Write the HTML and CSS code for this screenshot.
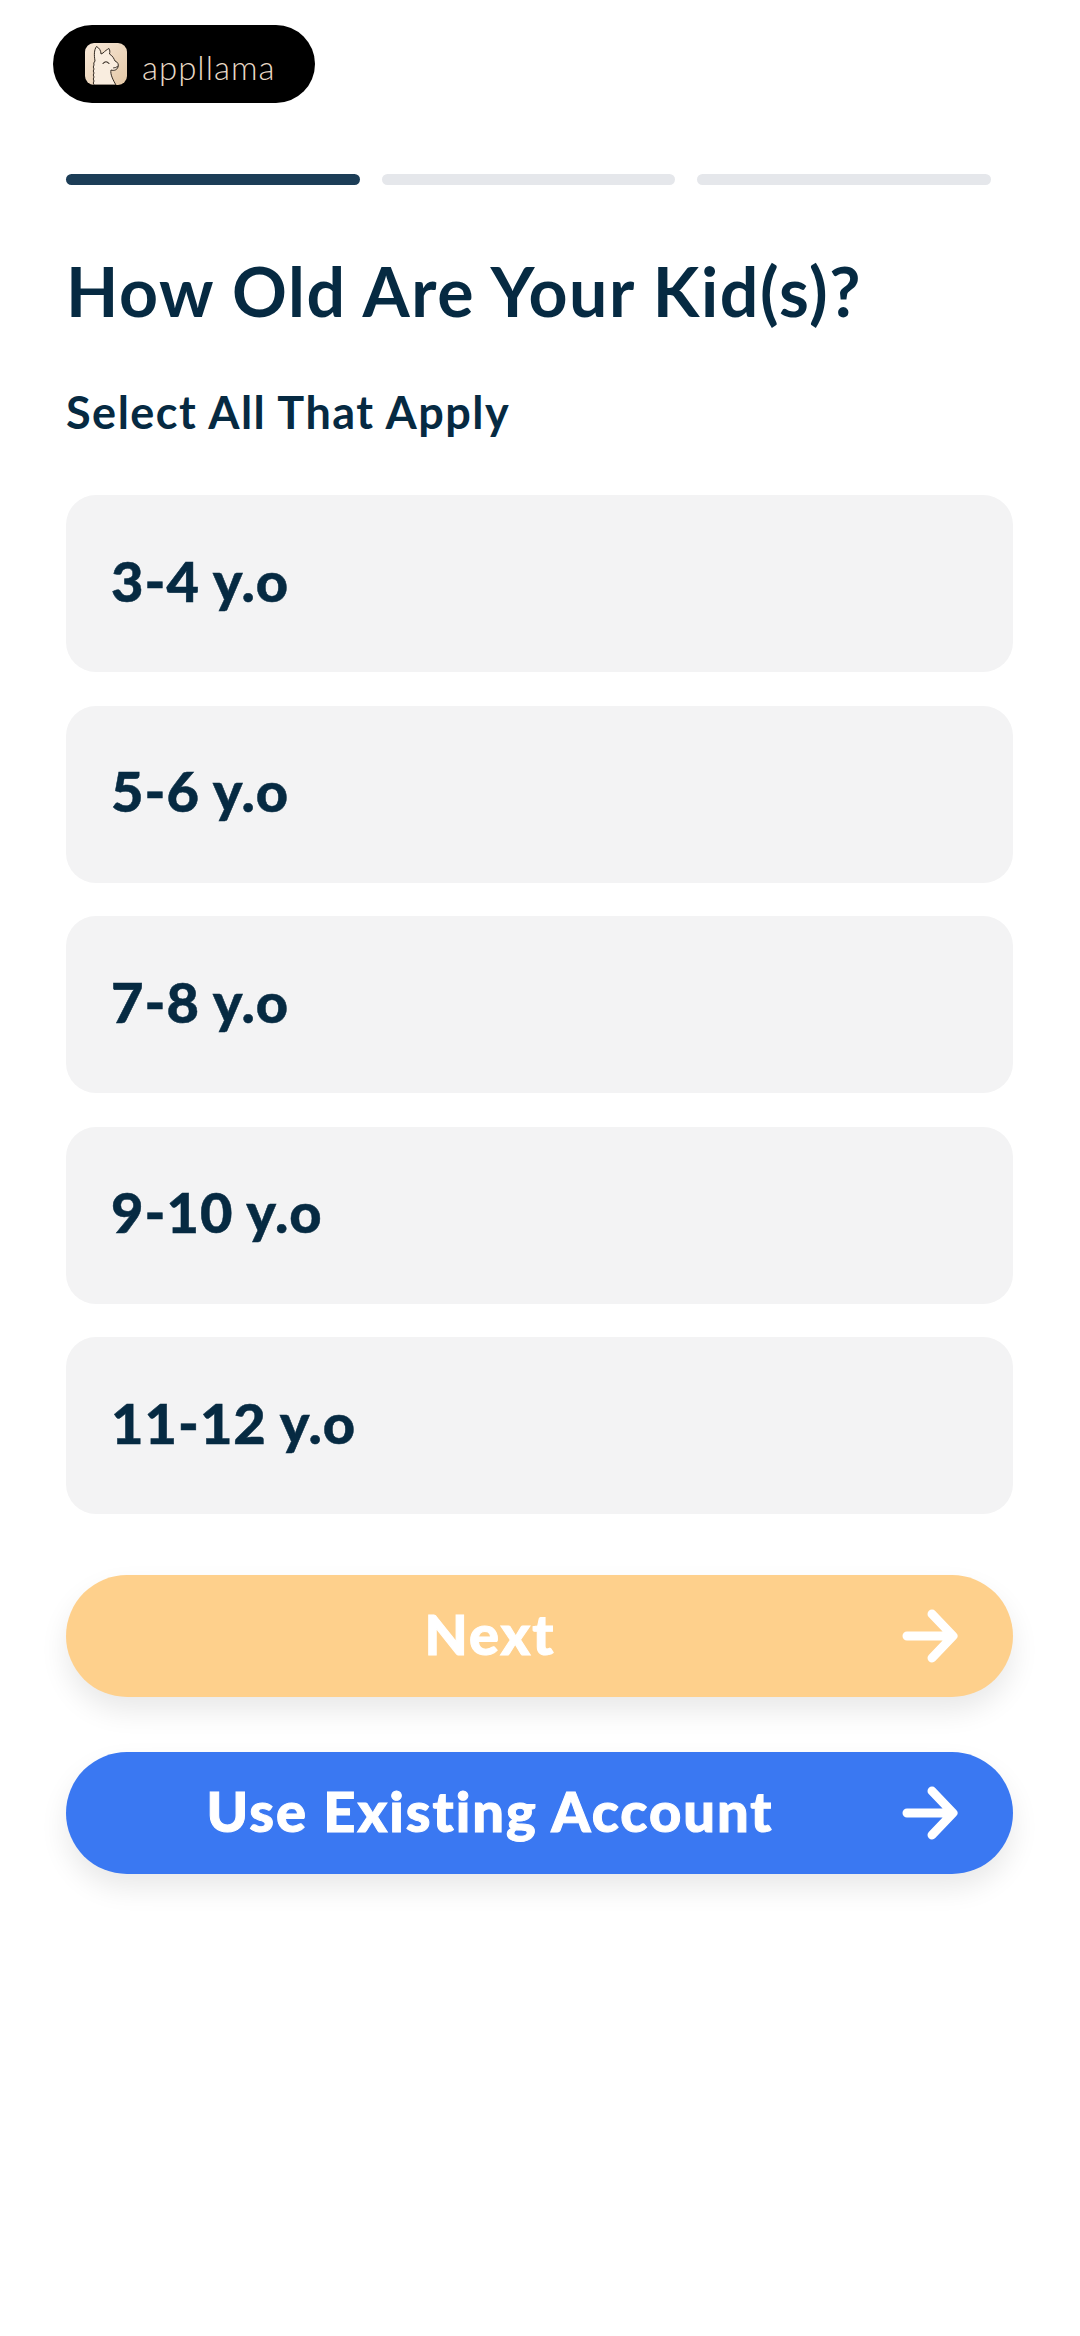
FILE: index.html
```html
<!DOCTYPE html>
<html lang="en">
<head>
    <meta charset="UTF-8">
    <meta name="viewport" content="width=device-width, initial-scale=1.0">
    <title>How Old Are Your Kid(s)?</title>
    <link rel="stylesheet" href="styles.css">
</head>
<body>
    <div id="container">
        <div class="logo">
            <svg class="logo-icon" width="42" height="42" viewBox="0 0 42 42">
                <defs>
                    <linearGradient id="logoBg" x1="0" y1="0" x2="1" y2="1">
                        <stop offset="0" stop-color="#f8e9d9"/>
                        <stop offset="1" stop-color="#e4c8a6"/>
                    </linearGradient>
                    <clipPath id="logoClip"><rect width="42" height="42" rx="9"/></clipPath>
                </defs>
                <g clip-path="url(#logoClip)">
                    <rect width="42" height="42" fill="url(#logoBg)"/>
                    <path d="M9 42 q-1.5 -2 0 -4 q-1.5 -2 0 -4 q-1.5 -2 0 -4 q-1.5 -2 0 -4 q-1.5 -2 0 -4 q-1 -2 1 -4 C9 12 9 7 11.500 3.500 C14.500 5 16 8 16 11 L18 10 C20 8 22 6.500 24 5.500 C25 7 25 9 24.500 11 C28 13 29 16 30 18 C33 19 34 22 33 24 C32 27 29 28 26 27 C25 31 28 37 31 42 Z" fill="#f9eddf" stroke="#332a22" stroke-width="1" stroke-linejoin="round"/>
                    <path d="M18 20.500 Q21 17 24 20.500" fill="none" stroke="#332a22" stroke-width="1.100" stroke-linecap="round"/>
                    <path d="M28.500 25 Q31 25.200 33 23" fill="none" stroke="#332a22" stroke-width="0.900" stroke-linecap="round"/>
                </g>
            </svg>
            <span class="logo-text">appllama</span>
        </div>

        <div class="progress">
            <div class="progress-step active"></div>
            <div class="progress-step"></div>
            <div class="progress-step"></div>
        </div>

        <h1>How Old Are Your Kid(s)?</h1>
        <h2>Select All That Apply</h2>

        <div class="options">
            <div class="option">3-4 y.o</div>
            <div class="option">5-6 y.o</div>
            <div class="option">7-8 y.o</div>
            <div class="option">9-10 y.o</div>
            <div class="option">11-12 y.o</div>
        </div>

        <div class="actions">
            <button class="action-button next">
                <span class="action-label">Next</span>
                <svg width="58" height="58" viewBox="0 0 58 58"><path d="M6 29 H51 M31 7 L52 29 L31 51" fill="none" stroke="#fff" stroke-width="9" stroke-linecap="round" stroke-linejoin="round"/></svg>
            </button>
            <button class="action-button existing">
                <span class="action-label">Use Existing Account</span>
                <svg width="58" height="58" viewBox="0 0 58 58"><path d="M6 29 H51 M31 7 L52 29 L31 51" fill="none" stroke="#fff" stroke-width="9" stroke-linecap="round" stroke-linejoin="round"/></svg>
            </button>
        </div>
    </div>
</body>
</html>
```

FILE: styles.css
```css
* {
    margin: 0;
    padding: 0;
    box-sizing: border-box;
}

body, html {
    height: 100%;
    font-family: Lato, "Noto Sans", sans-serif;
    font-variant-ligatures: none;
    background-color: #fff;
    color: #062a42;
}

#container {
    padding: 25px 67px 0 66px;
}

.logo {
    display: flex;
    align-items: center;
    width: 262px;
    height: 78px;
    margin-left: -13px;
    padding-left: 32px;
    gap: 15px;
    background-color: #000;
    border-radius: 39px;
}

.logo-text {
    margin-top: 6px;
    font-size: 33px;
    font-weight: 300;
    letter-spacing: 1px;
    color: #e9dac7;
}

.progress {
    display: flex;
    gap: 22px;
    margin-top: 71px;
    padding-right: 22px;
}

.progress-step {
    flex: 1;
    height: 11px;
    background-color: #e5e7eb;
    border-radius: 6px;
}

.progress-step.active {
    background-color: #1c3d57;
}

h1 {
    margin-top: 64px;
    font-size: 68px;
    line-height: 84px;
    font-weight: 700;
    letter-spacing: 1.600px;
}

h2 {
    margin-top: 53px;
    font-size: 45px;
    line-height: 52px;
    font-weight: 700;
    letter-spacing: 1.500px;
}

.options {
    display: flex;
    flex-direction: column;
    gap: 33.500px;
    margin-top: 57px;
}

.option {
    display: flex;
    align-items: center;
    height: 177px;
    padding-left: 45px;
    padding-bottom: 7px;
    background-color: #f3f3f4;
    border-radius: 30px;
    font-size: 56px;
    font-weight: 900;
    letter-spacing: 1px;
    -webkit-text-stroke: 0.500px #062a42;
}

.actions {
    display: flex;
    flex-direction: column;
    gap: 55px;
    margin-top: 61px;
}

.action-button {
    display: flex;
    align-items: center;
    height: 122px;
    padding: 0 54px 0 13px;
    border: none;
    border-radius: 61px;
    font-family: inherit;
    font-size: 56px;
    font-weight: 900;
    letter-spacing: 2px;
    color: #fff;
    -webkit-text-stroke: 1px #fff;
    box-shadow: 0 14px 28px rgba(0, 0, 0, 0.09);
}

.action-label {
    flex: 1;
    padding-bottom: 6px;
    text-align: center;
}

.next {
    background-color: #fed08c;
}

.existing {
    background-color: #3a78f2;
}
```
